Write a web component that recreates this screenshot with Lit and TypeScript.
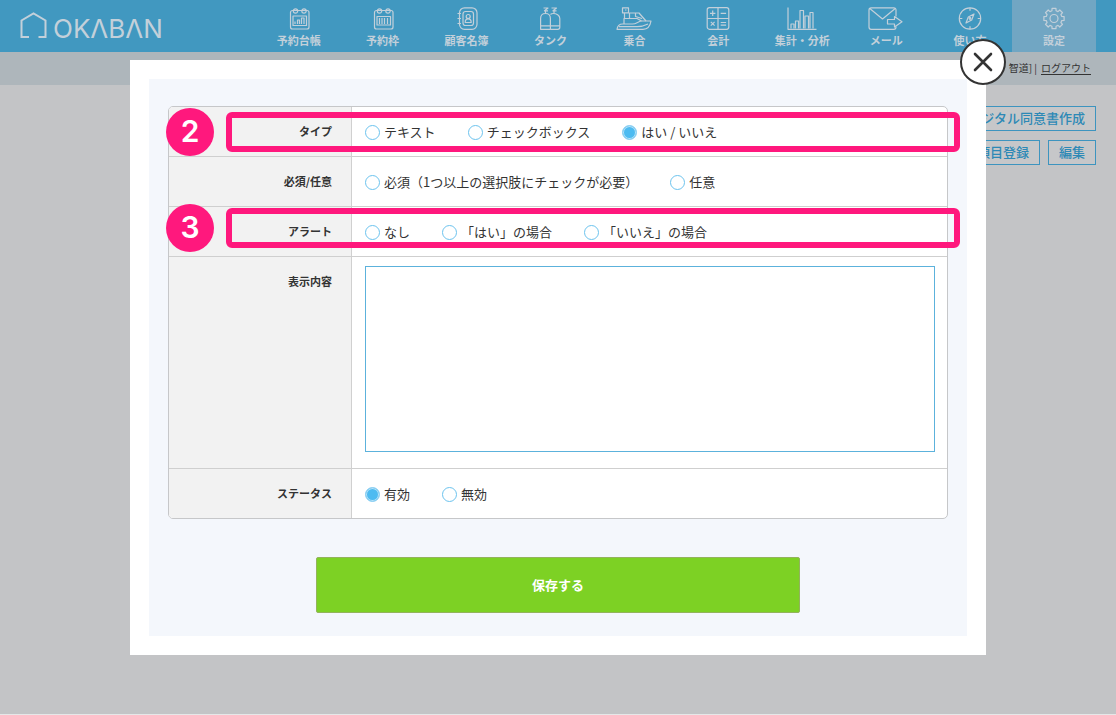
import { LitElement, html, svg, css } from "lit";
import { customElement, property, state } from "lit/decorators.js";
import { classMap } from "lit/directives/class-map.js";

const gearPath = (() => {
  const teeth = 8;
  const parts: string[] = [];
  for (let i = 0; i < teeth; i++) {
    const base = (i * Math.PI * 2) / teeth;
    const steps: [number, number][] = [
      [-0.26, 8],
      [-0.19, 10.3],
      [0.19, 10.3],
      [0.26, 8],
    ];
    for (const [a, r] of steps) {
      const x = 18 + Math.sin(base + a) * r;
      const y = 11.5 - Math.cos(base + a) * r;
      parts.push(`${x.toFixed(2)} ${y.toFixed(2)}`);
    }
  }
  return `M${parts.join("L")}Z`;
})();

const icons: Record<string, unknown> = {
  ledger: svg`
    <rect x="9.5" y="3.5" width="18.500" height="18.500" rx="2"/>
    <circle cx="14.500" cy="4" r="2.200"/><circle cx="23" cy="4" r="2.200"/>
    <rect x="12" y="9" width="13.500" height="9.5"/>
    <path d="M14 17v-2.500M16.5 17v-4h2v4M20.5 17v-6h2.5v6"/>`,
  slots: svg`
    <rect x="9.5" y="3.5" width="18.500" height="18.500" rx="2"/>
    <circle cx="14.500" cy="4" r="2.200"/><circle cx="23" cy="4" r="2.200"/>
    <path d="M12 9.500h13.500v8.500H12zM14.5 11v6M17 11v6M19.500 11v6M22.500 11v6"/>`,
  customers: svg`
    <rect x="10.5" y="0.8" width="17.500" height="21.5" rx="5"/>
    <rect x="14" y="4.5" width="10.500" height="14" rx="2.500"/>
    <circle cx="19.2" cy="9.5" r="2"/>
    <path d="M16.200 15.500c0-2.500 1-3.600 3-3.600s3 1.100 3 3.600z"/>
    <path d="M8.5 6.5h3.500M8.5 11.5h3.5M8.5 16.5h3.5"/>`,
  tanks: svg`
    <path d="M8.6 22.3V11.5c0-3.2 2-5 4.900-5s4.900 1.800 4.900 5v10.800z"/>
    <path d="M18.500 7.500c.6-.7 1.500-1 2.800-1 3 0 6.500 1.800 6.500 5v8.800c0 1.300-.8 2-2 2h-7.300M8.600 18.800h19.200"/>
    <path d="M13.500 6.500V3.500M11.500 1h4.500l-3.500 2.800H16M22 6.500V3.500M19.500 1h5l-3.500 2.800h3.500"/>`,
  boat: svg`
    <path d="M1 22.300c.5-3.500 2.500-5.300 5.500-5.300h10c4 0 6-3 9.500-3h9c-.8 5-3 8.300-8 8.300z"/>
    <path d="M3 19.700h18c5 0 8-1.200 11-2.700M8 17v-5.500h13l4.500 2.500"/>
    <path d="M13.500 11.500V6h9.500l7 8M19.500 6v3.500l6.500 2M6.500.8h6v5h-6zM8.500 6v5.500M9 3h1.500"/>`,
  accounts: svg`
    <rect x="7.200" y=".7" width="21.600" height="21.600" rx="2.200"/>
    <path d="M18 .7v21.600M7.200 11.500h21.600M10 6.300h5.400M12.700 3.600V9M20.700 6.300h5.400M10.800 14.900l3.800 3.800M14.600 14.900l-3.800 3.800M20.700 15.500h5.400M20.700 18.200h5.400"/>`,
  chart: svg`
    <path d="M4 .5v21.800h28.500"/>
    <path d="M7 21.500v-4.500h3v4.500M11.500 21.500v-7.500h3v7.500M16 21.500V3.500h3.500v18M21 21.500V9h3.500v12.500M26 21.500v-16h3v16"/>`,
  mail: svg`
    <path d="M28 9.500V3c0-1.500-.8-2.200-2.200-2.200H3.200C1.800.8 1 1.500 1 3v17c0 1.500.8 2.300 2.200 2.300h22.600c1.400 0 2.200-.8 2.200-2.300v-.5"/>
    <path d="M1.800 1.500l12.700 10.500L27.200 1.500M19.500 12.500h7V9.500l7.500 5.300-7.500 5.200v-3h-7z"/>`,
  compass: svg`
    <circle cx="18" cy="11.500" r="10.700"/>
    <path d="M22 7l-2.300 6-5.700 3 2.300-6z"/><circle cx="18" cy="11.500" r=".8"/>
    <path d="M18 .8v3M18 19.200v3M7.300 11.500h3M25.700 11.500h3"/>`,
  gear: svg`<path d="${gearPath}"/><circle cx="18" cy="11.500" r="4"/>`,
};

const fontStack = css`"Noto Sans CJK JP", "Noto Sans", sans-serif`;

@customElement("nav-item")
class NavItem extends LitElement {
  @property() icon = "";
  @property() label = "";
  @property({ type: Boolean }) active = false;

  static styles = css`
    :host {
      display: block;
    }
    .item {
      display: flex;
      flex-direction: column;
      align-items: center;
      box-sizing: border-box;
      height: 52px;
      padding-top: 7px;
      gap: 1px;
      color: #c3d0da;
      text-decoration: none;
      white-space: nowrap;
      font: 700 11px/16px ${fontStack};
    }
    .active {
      background: #71a6c3;
    }
    .icon {
      width: 36px;
      height: 24px;
      fill: none;
      stroke: currentColor;
      stroke-width: 1.2;
      stroke-linejoin: round;
    }
  `;

  render() {
    return html`<a class=${classMap({ item: true, active: this.active })} href="#">
      <svg class="icon" viewBox="0 0 36 24" aria-hidden="true">${icons[this.icon]}</svg>
      <span>${this.label}</span>
    </a>`;
  }
}

@customElement("radio-row")
class RadioRow extends LitElement {
  @property() name = "";
  @property() label = "";
  @property({ type: Array }) options: string[] = [];
  @property({ type: Number }) selected = -1;

  static styles = css`
    :host {
      display: block;
    }
    .group {
      display: flex;
      flex-wrap: wrap;
      gap: 0 32px;
    }
    .option {
      display: flex;
      align-items: center;
      gap: 4px;
      font: 400 13px/20px ${fontStack};
      color: #333;
      white-space: nowrap;
    }
    .radio {
      appearance: none;
      box-sizing: border-box;
      width: 15px;
      height: 15px;
      margin: 0;
      border: 1px solid #6cc3ee;
      border-radius: 50%;
      background: #fff;
    }
    .radio:checked {
      border-color: #8fd0f2;
      background: #4dbbf1;
      box-shadow: inset 0 0 0 1px #b9e2f7;
    }
  `;

  render() {
    return html`<div class="group" role="radiogroup" aria-label=${this.label}>
      ${this.options.map(
        (text, i) => html`<label class="option">
          <input
            class="radio"
            type="radio"
            name=${this.name}
            .checked=${i === this.selected}
            @change=${() => (this.selected = i)}
          />${text}
        </label>`
      )}
    </div>`;
  }
}

@customElement("app-root")
class AppRoot extends LitElement {
  @state() private nav = [
    ["ledger", "予約台帳"],
    ["slots", "予約枠"],
    ["customers", "顧客名簿"],
    ["tanks", "タンク"],
    ["boat", "乗合"],
    ["accounts", "会計"],
    ["chart", "集計・分析"],
    ["mail", "メール"],
    ["compass", "使い方"],
    ["gear", "設定"],
  ];

  static styles = css`
    :host {
      display: block;
      position: relative;
      box-sizing: border-box;
      min-height: 100vh;
      border-bottom: 1px solid #e6e7e8;
      background: #c3c4c6;
      color: #333;
      font: 400 13px/20px ${fontStack};
    }
    .header {
      display: flex;
      justify-content: space-between;
      height: 52px;
      padding: 0 20px;
      background: #4198c0;
    }
    .logo {
      display: flex;
      align-items: flex-end;
      gap: 5px;
      padding-bottom: 13px;
      color: #c3d0da;
      text-decoration: none;
      font: 400 26px/30px Inter, sans-serif;
    }
    .wordmark {
      height: 25px;
    }
    .house {
      width: 28px;
      height: 28px;
      fill: none;
      stroke: currentColor;
      stroke-width: 2;
    }
    .nav {
      display: grid;
      grid-template-columns: repeat(10, 1fr);
      flex: 0 0 78%;
    }
    .userbar {
      display: flex;
      justify-content: flex-end;
      gap: 4px;
      padding: 6px 25px 7px;
      background: #aeb6bb;
      font-size: 10px;
    }
    .logout {
      color: #333;
      text-underline-offset: 2px;
    }
    .actions {
      display: flex;
      flex-direction: column;
      gap: 9px;
      padding: 21px 20px;
    }
    .action-row {
      display: flex;
      justify-content: flex-end;
      gap: 8px;
    }
    .action {
      box-sizing: border-box;
      height: 25px;
      padding: 0 10px 2px;
      border: 1px solid #3d94bf;
      background: #c6c7c9;
      color: #2d89b6;
      font: 500 13px/20px ${fontStack};
    }
    .overlay {
      position: absolute;
      inset: 0;
      padding: 60px 130px;
    }
    .modal {
      position: relative;
      padding: 19px;
      background: #fff;
    }
    .close {
      position: absolute;
      top: -21px;
      right: -20px;
      display: grid;
      place-items: center;
      width: 46px;
      height: 46px;
      padding: 0;
      border: 2px solid #333;
      border-radius: 50%;
      background: #fff;
    }
    .cross {
      width: 20px;
      height: 20px;
      stroke: #333;
      stroke-width: 2.6;
      stroke-linecap: round;
    }
    .panel {
      display: flex;
      flex-direction: column;
      align-items: center;
      gap: 38px;
      padding: 27px 19px 23px;
      background: #f4f7fc;
    }
    .sheet {
      position: relative;
      align-self: stretch;
      border: 1px solid #c6c7c9;
      border-radius: 5px;
      background: #fff;
    }
    .row {
      display: grid;
      grid-template-columns: 183px 1fr;
    }
    .row + .row {
      border-top: 1px solid #cfcfcf;
    }
    .term {
      padding: 14px 19px 15px 0;
      border-right: 1px solid #d0d0d0;
      background: #f2f2f2;
      text-align: right;
      font-size: 11px;
      font-weight: 700;
    }
    .row:first-child .term {
      border-top-left-radius: 4px;
    }
    .row:last-of-type .term {
      border-bottom-left-radius: 4px;
    }
    .value {
      padding: 15px 13px 14px;
    }
    .value-text {
      display: flex;
      padding: 9px 12px 16px 13px;
    }
    .textarea {
      box-sizing: border-box;
      flex: 1;
      height: 186px;
      margin: 0;
      border: 1px solid #5cb2dc;
      background: #fff;
      resize: none;
      font: 400 13px/20px ${fontStack};
    }
    .callouts {
      position: absolute;
      top: 1px;
      left: -3px;
      right: -13px;
      display: flex;
      flex-direction: column;
      gap: 48px;
      pointer-events: none;
    }
    .callout {
      display: flex;
      align-items: center;
      gap: 12px;
    }
    .number {
      width: 48px;
      height: 48px;
      border-radius: 50%;
      background: #ff187d;
      color: #fff;
      text-align: center;
      font: 600 30px/46px Inter, sans-serif;
    }
    .frame {
      box-sizing: border-box;
      flex: 1;
      height: 40px;
      border: 6px solid #ff187d;
      border-radius: 6px;
    }
    .save {
      width: 62%;
      height: 56px;
      border: 1px solid #93b35c;
      border-radius: 2px;
      background: #7dd124;
      color: #fff;
      font: 700 13px/20px ${fontStack};
    }
  `;

  render() {
    return html`
      <header class="header">
        <a class="logo" href="#">
          <svg class="house" viewBox="0 0 28 28" aria-hidden="true">
            <path d="M9 26H1.500V9.500L13.500 2.500 25.500 9.500V26H18.500" />
          </svg>
          <span class="wordmark">OKΛBΛN</span>
        </a>
        <nav class="nav">
          ${this.nav.map(
            ([icon, label], i) =>
              html`<nav-item icon=${icon} label=${label} ?active=${i === 9}></nav-item>`
          )}
        </nav>
      </header>
      <div class="userbar">
        <span>智道] |</span>
        <a class="logout" href="#">ログアウト</a>
      </div>
      <main class="actions">
        <div class="action-row">
          <button class="action" type="button">デジタル同意書作成</button>
        </div>
        <div class="action-row">
          <button class="action" type="button">項目登録</button>
          <button class="action" type="button">編集</button>
        </div>
      </main>
      <div class="overlay">
        <section class="modal" role="dialog" aria-modal="true">
          <form class="panel" @submit=${(e: Event) => e.preventDefault()}>
            <div class="sheet">
              <div class="row">
                <div class="term">タイプ</div>
                <radio-row
                  class="value"
                  name="type"
                  label="タイプ"
                  .options=${["テキスト", "チェックボックス", "はい / いいえ"]}
                  .selected=${2}
                ></radio-row>
              </div>
              <div class="row">
                <div class="term">必須/任意</div>
                <radio-row
                  class="value"
                  name="required"
                  label="必須/任意"
                  .options=${["必須（1つ以上の選択肢にチェックが必要）", "任意"]}
                ></radio-row>
              </div>
              <div class="row">
                <div class="term">アラート</div>
                <radio-row
                  class="value"
                  name="alert"
                  label="アラート"
                  .options=${["なし", "「はい」の場合", "「いいえ」の場合"]}
                ></radio-row>
              </div>
              <div class="row">
                <label class="term" for="content">表示内容</label>
                <div class="value-text">
                  <textarea class="textarea" id="content"></textarea>
                </div>
              </div>
              <div class="row">
                <div class="term">ステータス</div>
                <radio-row
                  class="value"
                  name="status"
                  label="ステータス"
                  .options=${["有効", "無効"]}
                  .selected=${0}
                ></radio-row>
              </div>
              <aside class="callouts">
                <div class="callout"><span class="number">2</span><span class="frame"></span></div>
                <div class="callout"><span class="number">3</span><span class="frame"></span></div>
              </aside>
            </div>
            <button class="save" type="submit">保存する</button>
          </form>
          <button class="close" type="button" aria-label="閉じる">
            <svg class="cross" viewBox="0 0 20 20" aria-hidden="true">
              <path d="M2 2l16 16M18 2L2 18" />
            </svg>
          </button>
        </section>
      </div>
    `;
  }
}
